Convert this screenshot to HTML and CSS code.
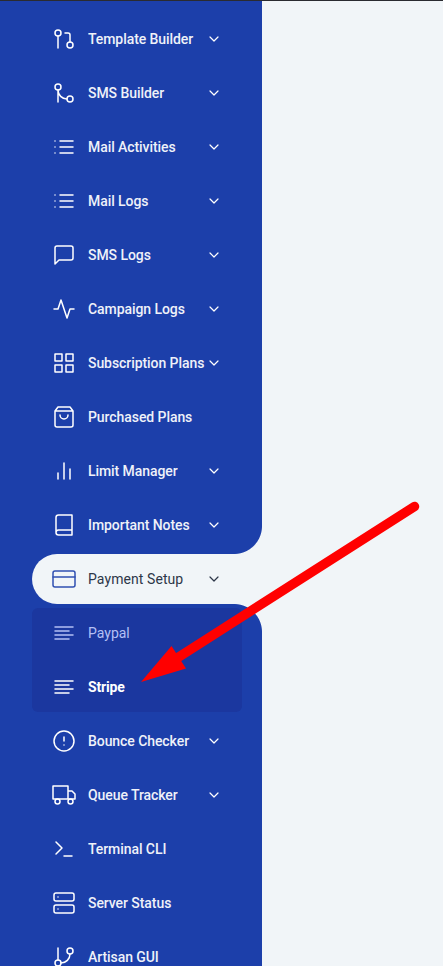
FILE: index.html
```html
<!DOCTYPE html>
<html lang="en">
<head>
<meta charset="utf-8">
<title>Payment Setup</title>
<link rel="stylesheet" href="styles.css">
</head>
<body>
<svg class="defs" width="0" height="0">
  <symbol id="down" viewBox="0 0 24 24"><path d="M6 9l6 6 6-6"/></symbol>
  <symbol id="list" viewBox="0 0 24 24"><path d="M8 6h13M8 12h13M8 18h13M3 6h.01M3 12h.01M3 18h.01"/></symbol>
  <symbol id="align" viewBox="0 0 24 24"><path d="M17 10H3M21 6H3M21 14H3M17 18H3"/></symbol>
</svg>
<nav class="side">
  <a class="item"><svg class="icon" viewBox="0 0 24 24"><circle cx="18" cy="18" r="3"/><circle cx="6" cy="6" r="3"/><path d="M13 6h3a2 2 0 0 1 2 2v7M6 9v12"/></svg><span class="label">Template Builder</span><svg class="chev"><use href="#down"/></svg></a>
  <a class="item"><svg class="icon" viewBox="0 0 24 24"><circle cx="18" cy="18" r="3"/><circle cx="6" cy="6" r="3"/><path d="M6 21V9a9 9 0 0 0 9 9"/></svg><span class="label">SMS Builder</span><svg class="chev"><use href="#down"/></svg></a>
  <a class="item"><svg class="icon"><use href="#list"/></svg><span class="label">Mail Activities</span><svg class="chev"><use href="#down"/></svg></a>
  <a class="item"><svg class="icon"><use href="#list"/></svg><span class="label">Mail Logs</span><svg class="chev"><use href="#down"/></svg></a>
  <a class="item"><svg class="icon" viewBox="0 0 24 24"><path d="M21 15a2 2 0 0 1-2 2H7l-4 4V5a2 2 0 0 1 2-2h14a2 2 0 0 1 2 2z"/></svg><span class="label">SMS Logs</span><svg class="chev"><use href="#down"/></svg></a>
  <a class="item"><svg class="icon" viewBox="0 0 24 24"><path d="M22 12h-4l-3 9L9 3l-3 9H2"/></svg><span class="label">Campaign Logs</span><svg class="chev"><use href="#down"/></svg></a>
  <a class="item"><svg class="icon" viewBox="0 0 24 24"><path d="M3 3h7v7H3zM14 3h7v7h-7zM14 14h7v7h-7zM3 14h7v7H3z"/></svg><span class="label">Subscription Plans</span><svg class="chev"><use href="#down"/></svg></a>
  <a class="item"><svg class="icon" viewBox="0 0 24 24"><path d="M6 2L3 6v14a2 2 0 0 0 2 2h14a2 2 0 0 0 2-2V6l-3-4zM3 6h18M16 10a4 4 0 0 1-8 0"/></svg><span class="label">Purchased Plans</span></a>
  <a class="item"><svg class="icon" viewBox="0 0 24 24"><path d="M18 20V10M12 20V4M6 20v-6"/></svg><span class="label">Limit Manager</span><svg class="chev"><use href="#down"/></svg></a>
  <a class="item"><svg class="icon" viewBox="0 0 24 24"><path d="M4 19.500A2.500 2.500 0 0 1 6.500 17H20M6.500 2H20v20H6.500A2.500 2.500 0 0 1 4 19.500v-15A2.500 2.500 0 0 1 6.500 2z"/></svg><span class="label">Important Notes</span><svg class="chev"><use href="#down"/></svg></a>
  <a class="item active"><svg class="icon" viewBox="0 0 24 24"><rect x="1" y="4" width="22" height="16" rx="2"/><path d="M1 10h22"/></svg><span class="label">Payment Setup</span><svg class="chev"><use href="#down"/></svg></a>
  <div class="submenu">
    <a class="item muted"><svg class="icon"><use href="#align"/></svg><span class="label">Paypal</span></a>
    <a class="item current"><svg class="icon"><use href="#align"/></svg><span class="label">Stripe</span></a>
  </div>
  <a class="item"><svg class="icon" viewBox="0 0 24 24"><circle cx="12" cy="12" r="10"/><path d="M12 8v4M12 16h.01"/></svg><span class="label">Bounce Checker</span><svg class="chev"><use href="#down"/></svg></a>
  <a class="item"><svg class="icon" viewBox="0 0 24 24"><path d="M1 3h15v13H1zM16 8h4l3 3v5h-7z"/><circle cx="5.500" cy="18.500" r="2.500"/><circle cx="18.500" cy="18.500" r="2.500"/></svg><span class="label">Queue Tracker</span><svg class="chev"><use href="#down"/></svg></a>
  <a class="item"><svg class="icon" viewBox="0 0 24 24"><path d="M4 17l6-6-6-6M12 19h8"/></svg><span class="label">Terminal CLI</span></a>
  <a class="item"><svg class="icon" viewBox="0 0 24 24"><rect x="2" y="2" width="20" height="8" rx="2"/><rect x="2" y="14" width="20" height="8" rx="2"/><path d="M6 6h.01M6 18h.01"/></svg><span class="label">Server Status</span></a>
  <a class="item"><svg class="icon" viewBox="0 0 24 24"><path d="M6 3v12M18 9a9 9 0 0 1-9 9"/><circle cx="18" cy="6" r="3"/><circle cx="6" cy="18" r="3"/></svg><span class="label">Artisan GUI</span></a>
</nav>
<svg class="arrow" viewBox="0 0 443 966"><path class="shaft" d="M414.500 506.500L178 657.500"/><path class="head" d="M141 682L171.500 646L186 668.500z"/></svg>
</body>
</html>
```
FILE: styles.css
```css
* { box-sizing: border-box; }

body {
  margin: 0;
  height: 966px;
  overflow: hidden;
  position: relative;
  border-top: 1px solid #2a2b30;
  background: #f1f5f8;
  font: 500 14px/20px Roboto, sans-serif;
  letter-spacing: -.07px;
}

.defs { position: absolute; }

.side {
  width: 262px;
  height: 965px;
  padding: 13px 0 0 32px;
  overflow: hidden;
  background: #1c3faa;
  color: #fff;
}

.item {
  display: flex;
  align-items: center;
  position: relative;
  width: 230px;
  height: 50px;
  margin-bottom: 4px;
  padding-left: 20px;
}

.icon, .chev {
  flex: none;
  fill: none;
  stroke: currentColor;
  stroke-width: 1.5;
  stroke-linecap: round;
  stroke-linejoin: round;
}

.icon {
  width: 24px;
  height: 24px;
}

.label {
  width: 118px;
  margin-left: 12px;
  white-space: nowrap;
  opacity: .93;
}

.chev {
  width: 16px;
  height: 16px;
  stroke-width: 1.8;
}

.active {
  border-radius: 25px 0 0 25px;
  background: #f1f5f8;
  color: #2d3748;
}

.active .icon { color: #1c3faa; opacity: .9; }
.active .label { font-weight: 400; letter-spacing: .08px; opacity: 1; }

/* Curved joins between the active row and the sidebar edge */
.active::before, .active::after {
  content: "";
  position: absolute;
  right: 0;
  width: 28px;
  height: 28px;
}

.active::before {
  bottom: 100%;
  background: radial-gradient(circle at 0 0, transparent 27.5px, #f1f5f8 28.5px);
}

.active::after {
  top: 100%;
  background: radial-gradient(circle at 0 100%, transparent 27.5px, #f1f5f8 28.5px);
}

.submenu {
  width: 210px;
  height: 104px;
  margin-bottom: 4px;
  border-radius: 6px;
  background: #1b379f;
}

.muted { color: #b4c0f5; }
.muted .label { font-weight: 400; letter-spacing: 0; opacity: 1; }
.current .label { font-weight: 700; letter-spacing: -.18px; opacity: 1; }

.arrow {
  position: absolute;
  top: -1px;
  left: 0;
  width: 443px;
  height: 966px;
}

.shaft {
  stroke: #f00;
  stroke-width: 9.5;
  stroke-linecap: round;
}

.head { fill: #f00; }
```
